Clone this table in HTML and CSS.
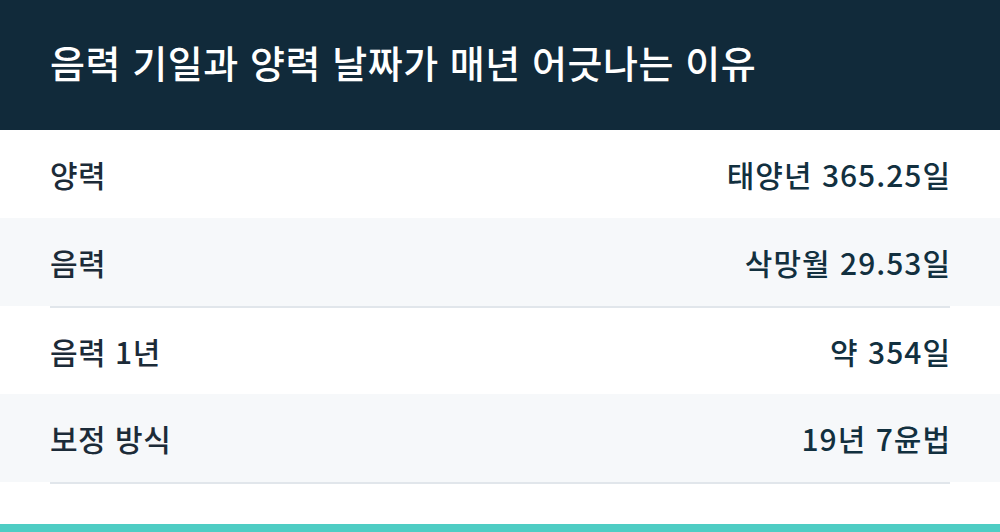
FILE: index.html
```html
<!DOCTYPE html>
<html lang="ko">
<head>
<meta charset="utf-8">
<link rel="stylesheet" href="styles.css">
</head>
<body>
<div class="page">
  <header class="header">
    <h1 class="title">음력 기일과 양력 날짜가 매년 어긋나는 이유</h1>
  </header>
  <div class="rows">
    <div class="row">
      <span class="label">양력</span>
      <span class="value">태양년 365.25일</span>
    </div>
    <div class="row alt">
      <span class="label">음력</span>
      <span class="value">삭망월 29.53일</span>
    </div>
    <div class="divider"></div>
    <div class="row short">
      <span class="label">음력 1년</span>
      <span class="value">약 354일</span>
    </div>
    <div class="row alt">
      <span class="label">보정 방식</span>
      <span class="value">19년 7윤법</span>
    </div>
    <div class="divider"></div>
  </div>
  <div class="spacer"></div>
  <div class="accent"></div>
</div>
</body>
</html>
```

FILE: styles.css
```css
* { box-sizing: border-box; margin: 0; padding: 0; }
html, body { width: 1000px; height: 532px; background: #ffffff; overflow: hidden; }
body { font-family: "Noto Sans CJK KR", "Noto Sans", sans-serif; }
.page { display: flex; flex-direction: column; height: 532px; }
.header {
  height: 130px;
  background: #112a3a;
  display: flex;
  align-items: center;
  padding: 0 50px;
}
.title {
  color: #ffffff;
  font-size: 38px;
  font-weight: 500;
  letter-spacing: 0.55px;
  line-height: 1;
  padding-bottom: 6px;
}
.rows { display: flex; flex-direction: column; }
.row {
  height: 88px;
  display: flex;
  align-items: center;
  justify-content: space-between;
  padding: 0 50px;
  background: #ffffff;
}
.row.short { height: 86px; }
.row.alt { background: #f6f8fa; }
.label {
  font-size: 30px;
  font-weight: 500;
  color: #1c2b38;
  line-height: 1;
  letter-spacing: 0.5px;
}
.value {
  font-size: 30px;
  font-weight: 500;
  color: #12303f;
  line-height: 1;
  letter-spacing: 1px;
  margin-right: -1px;
}
.divider {
  height: 2px;
  margin: 0 50px;
  background: #e1e6eb;
}
.spacer { flex: 1; }
.accent { height: 8px; background: #4ecdc4; }
```
